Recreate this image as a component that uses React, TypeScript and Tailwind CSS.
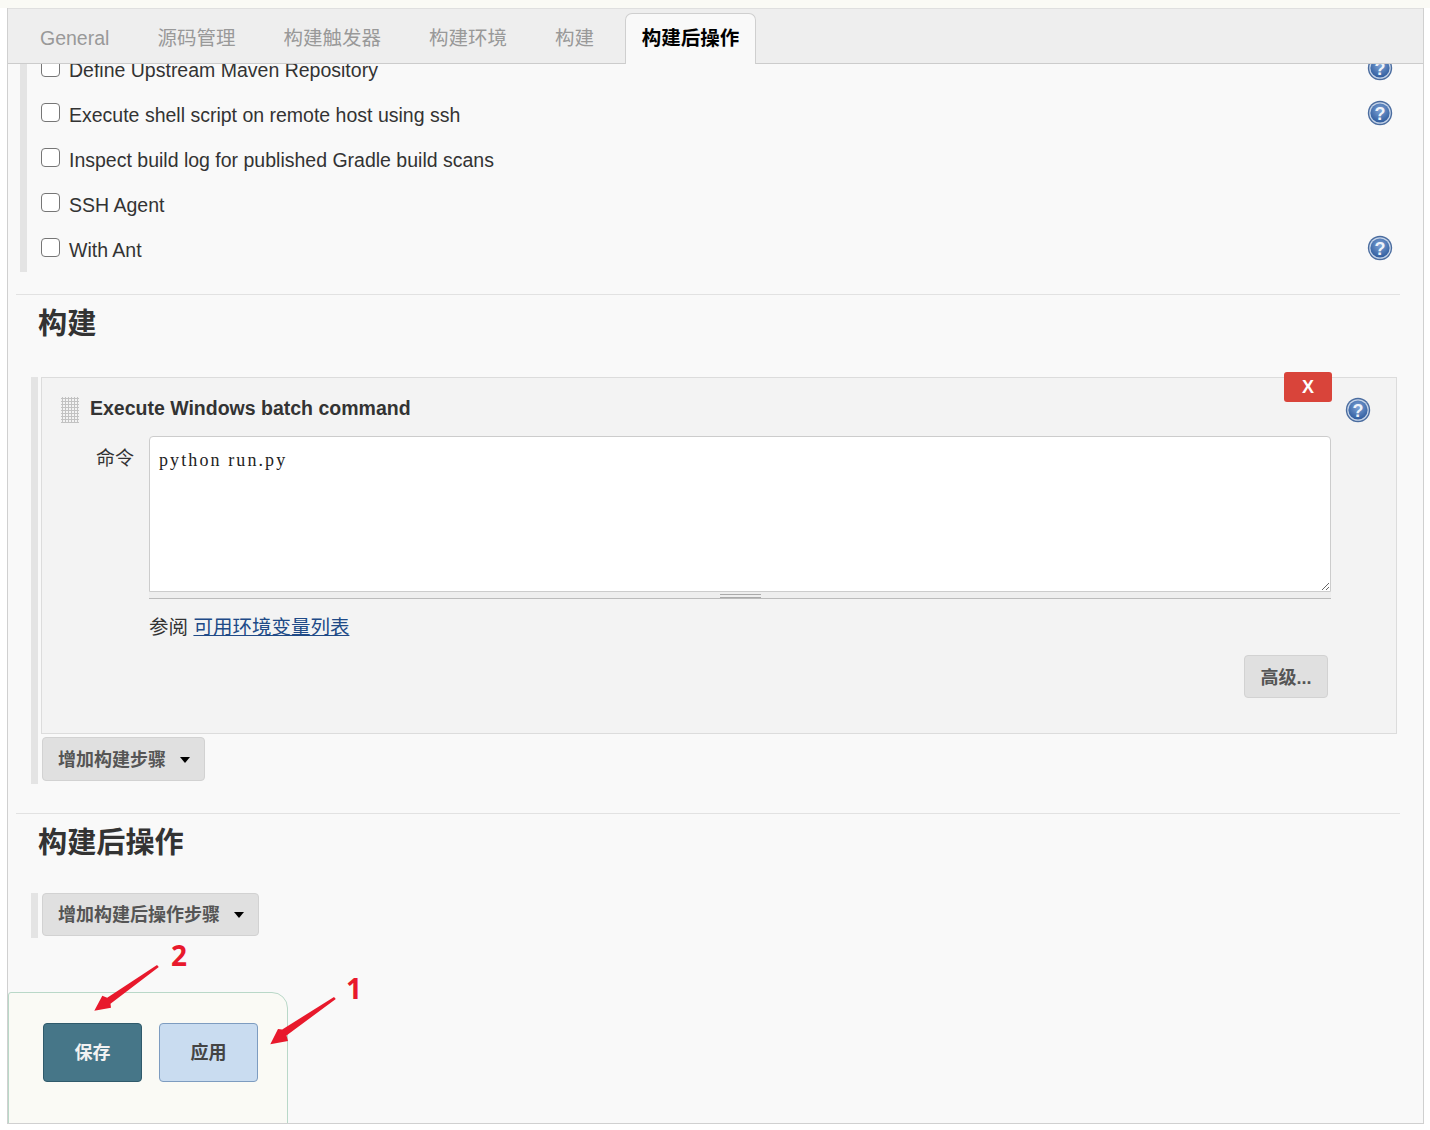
import React from 'react';

const font = "font-['Liberation_Sans','Noto_Sans_CJK_SC',sans-serif]";

const HelpIcon = ({ id }: { id: string }) => (
  <svg width="26" height="26" viewBox="0 0 26 26" className="shrink-0">
    <defs>
      <radialGradient id={id} cx="50%" cy="35%" r="65%">
        <stop offset="0%" stopColor="#7fa3d6" />
        <stop offset="100%" stopColor="#2f5c9e" />
      </radialGradient>
    </defs>
    <circle cx="13" cy="13" r="12.2" fill="#4a6c9f" />
    <circle cx="13" cy="13" r="10.8" fill="#c6d4e8" />
    <circle cx="13" cy="13" r="9.6" fill={`url(#${id})`} />
    <text x="13" y="19.5" textAnchor="middle" fontSize="18" fontWeight="700" fill="#eef3fa" fontFamily="Liberation Sans">?</text>
  </svg>
);

const Caret = () => <span className="ml-[14px] w-0 h-0 border-x-[5.5px] border-x-transparent border-t-[6px] border-t-black" />;

const CheckRow = ({ label, help, id }: { label: string; help?: boolean; id: string }) => (
  <div className="h-[45px] flex items-center justify-between pr-[7px]">
    <label className="mt-px flex items-center gap-[9px] text-[19.5px] text-[#333]">
      <input type="checkbox" className="appearance-none w-[19px] h-[19px] -mt-[7px] bg-white border border-[#767676] rounded-[4px]" />
      {label}
    </label>
    {help && <div className="-mt-[5px]"><HelpIcon id={id} /></div>}
  </div>
);

const StepButton = ({ label, size }: { label: string; size: string }) => (
  <button className={`${size} ml-px pl-[15px] flex items-center bg-[#e0e0e0] border border-[#d2d2d2] rounded-[4px] text-[18px] font-bold text-[#555]`}>
    {label}
    <Caret />
  </button>
);

const Arrow = ({ className, points }: { className: string; points: string }) => (
  <svg className={`absolute ${className}`} width="80" height="60" viewBox="0 0 80 60">
    <polygon points={points} fill="#e8192c" />
  </svg>
);

const App: React.FC = () => {
  return (
    <div className={`relative w-[1430px] h-[1130px] bg-white overflow-hidden ${font}`}>
      <div className="h-2 bg-[#fafaf5]" />
      <div className="ml-[7px] w-[1417px] h-[1116px] bg-[#f9f9f9] border-x border-b border-[#d0d0d0] overflow-hidden">
        {/* Tabs */}
        <div className="relative z-10 h-[56px] bg-[#eeeeee] border-t border-b border-t-[#dfdfdf] border-b-[#cccccc] flex items-end pl-[16px] text-[19.5px] text-[#999]">
          <span className="px-4 h-[50px] pt-[2px] mr-4 flex items-center">General</span>
          <span className="px-4 h-[50px] pt-[2px] mr-4 flex items-center">源码管理</span>
          <span className="px-4 h-[50px] pt-[2px] mr-4 flex items-center">构建触发器</span>
          <span className="px-4 h-[50px] pt-[2px] mr-4 flex items-center">构建环境</span>
          <span className="px-4 h-[50px] pt-[2px] mr-[15px] flex items-center">构建</span>
          <span className="-mb-px w-[131px] h-[51px] flex items-center justify-center bg-[#f9f9f9] border-x border-t border-[#cfcfcf] rounded-t-[7px] font-bold text-black">构建后操作</span>
        </div>

        {/* Checkbox options */}
        <div className="-mt-4 ml-3 w-[1380px] h-[224px] border-l-[7px] border-[#e4e4e4] pl-[14px]">
          <CheckRow label="Define Upstream Maven Repository" help id="h1" />
          <CheckRow label="Execute shell script on remote host using ssh" help id="h2" />
          <CheckRow label="Inspect build log for published Gradle build scans" id="h3" />
          <CheckRow label="SSH Agent" id="h4" />
          <CheckRow label="With Ant" help id="h5" />
        </div>

        <div className="mt-[22px] ml-2 w-[1384px] border-t border-[#e2e2e2]" />
        <h2 className="mt-[9px] ml-[30px] h-[39px] text-[29.15px] leading-10 font-bold text-[#333]">构建</h2>

        {/* Build step */}
        <div className="mt-[34px] ml-[23px] w-[1366px] border-l-[7px] border-[#e4e4e4] pl-[3px] pb-[3px]">
          <div className="relative h-[357px] bg-[#f3f3f3] border border-[#dcdcdc]">
            <button className="absolute -top-[6px] right-[64px] w-[48px] h-[30px] bg-[#d9443a] rounded-[3px] text-white text-[18px] font-bold">X</button>
            <div className="pt-[19px] pl-[19px] pr-[25px] h-[58px] flex items-start">
              <div className="w-[18px] h-[26px] bg-[radial-gradient(#c2c2c2_1.1px,transparent_1.1px)] bg-[length:3px_3px]" />
              <span className="ml-[11px] h-[24px] flex items-center text-[19.5px] font-bold text-[#333]">Execute Windows batch command</span>
              <div className="ml-auto"><HelpIcon id="h6" /></div>
            </div>
            <div className="flex pl-[54px]">
              <span className="w-[38px] mt-[10px] text-[19px] leading-[26px] text-[#333]">命令</span>
              <div className="ml-[15px] w-[1182px]">
                <textarea
                  readOnly
                  value="python run.py"
                  className="block w-full h-[156px] px-[9px] py-[10px] bg-white border border-[#cccccc] rounded-t-[4px] font-['Liberation_Serif',serif] text-[18px] tracking-[2.1px] leading-[26px] text-[#222]"
                />
                <div className="h-[7px] bg-[#eeeeee] border-b border-[#bbbbbb] flex justify-center pt-[2px]">
                  <div className="w-[41px] h-[4px] border-y border-[#aaaaaa]" />
                </div>
                <p className="mt-[14px] h-7 text-[19.5px] leading-7 text-[#333]">参阅 <a className="text-[#204a87] underline">可用环境变量列表</a></p>
              </div>
            </div>
            <div className="mt-[14px] mr-[68px] flex justify-end">
              <button className="w-[84px] h-[43px] pt-[3px] bg-[#e0e0e0] border border-[#d2d2d2] rounded-[4px] text-[18px] font-bold text-[#555]">高级...</button>
            </div>
          </div>
          <div className="mt-[3px]"><StepButton label="增加构建步骤" size="w-[163px] h-[44px] pt-[2px]" /></div>
        </div>

        <div className="mt-[29px] ml-2 w-[1384px] border-t border-[#e2e2e2]" />
        <h2 className="mt-[9px] ml-[30px] h-[39px] text-[29.15px] leading-10 font-bold text-[#333]">构建后操作</h2>

        {/* Post-build step */}
        <div className="mt-[31px] ml-[23px] w-[228px] border-l-[7px] border-[#e4e4e4] pl-[3px] pb-[2px]">
          <StepButton label="增加构建后操作步骤" size="w-[217px] h-[43px] pt-px" />
        </div>

        {/* Save bar */}
        <div className="mt-[54px] w-[280px] h-[132px] bg-[#fafaf5] border border-[#b9d8c8] rounded-tr-[16px] rounded-tl-[3px] pt-[30px] pl-[34px] flex gap-[17px] items-start">
          <button className="w-[99px] h-[59px] pt-px bg-[#467688] border border-[#2f5a6b] rounded-[4px] text-[#f2f2f2] text-[18px] font-bold">保存</button>
          <button className="w-[99px] h-[59px] pt-px bg-[#c9dcf0] border border-[#7d9cc0] rounded-[4px] text-[#444] text-[18px] font-bold">应用</button>
        </div>
      </div>

      {/* Annotations */}
      <Arrow className="left-[90px] top-[960px]" points="4.3,50.7 12.3,35.7 17.2,37.8 67,5 68.8,7 20.5,43.8 21,47.7" />
      <Arrow className="left-[266px] top-[992px]" points="4.3,52.3 12,37 16.2,37.5 68,5 69.8,7 20.5,43.5 22,49" />
      <span className="absolute left-[171px] top-[937px] text-[28px] leading-9 font-bold text-[#e8192c] font-['Open_Sans',sans-serif]">2</span>
      <span className="absolute left-[346px] top-[970px] text-[28px] leading-9 font-bold text-[#e8192c] font-['Open_Sans',sans-serif]">1</span>
    </div>
  );
};

export default App;
